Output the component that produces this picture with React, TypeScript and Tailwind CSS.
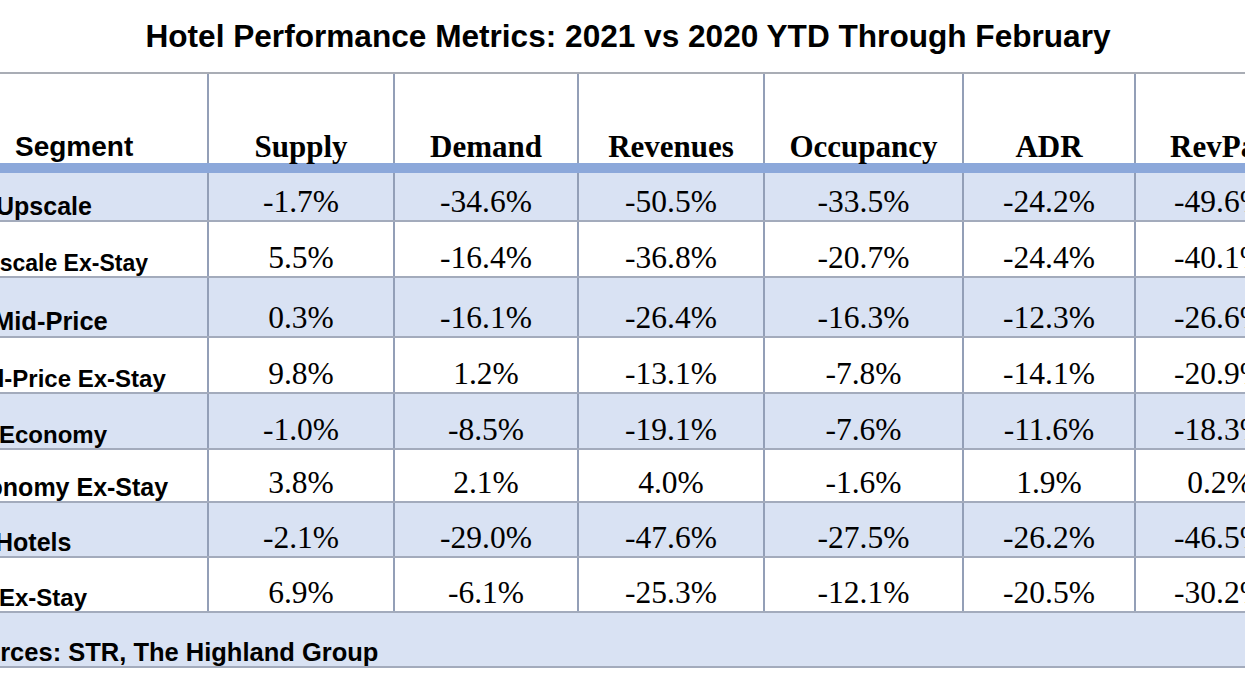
const columns = [
  { title: "Supply", width: "w-[186px]" },
  { title: "Demand", width: "w-[184px]" },
  { title: "Revenues", width: "w-[186px]" },
  { title: "Occupancy", width: "w-[199px]" },
  { title: "ADR", width: "w-[172px]" },
  { title: "RevPar", width: "w-[170px]" },
];

// label offsets are negative: the left of the sheet is cut off in the picture
const rows = [
  { label: "Upscale", label_cls: "ml-[-4px] text-[25px]", height: "h-[49px]", shaded: true, values: ["-1.7%", "-34.6%", "-50.5%", "-33.5%", "-24.2%", "-49.6%"] },
  { label: "Upscale Ex-Stay", label_cls: "ml-[-31px] text-[23px]", height: "h-[56px]", shaded: false, values: ["5.5%", "-16.4%", "-36.8%", "-20.7%", "-24.4%", "-40.1%"] },
  { label: "Mid-Price", label_cls: "ml-[-7px] text-[25.5px]", height: "h-[60px]", shaded: true, values: ["0.3%", "-16.1%", "-26.4%", "-16.3%", "-12.3%", "-26.6%"] },
  { label: "Mid-Price Ex-Stay", label_cls: "ml-[-37px] text-[24px]", height: "h-[56px]", shaded: false, values: ["9.8%", "1.2%", "-13.1%", "-7.8%", "-14.1%", "-20.9%"] },
  { label: "Economy", label_cls: "ml-[-1px] text-[24px]", height: "h-[56px]", shaded: true, values: ["-1.0%", "-8.5%", "-19.1%", "-7.6%", "-11.6%", "-18.3%"] },
  { label: "Economy Ex-Stay", label_cls: "ml-[-43px] text-[25px]", height: "h-[53px]", shaded: false, values: ["3.8%", "2.1%", "4.0%", "-1.6%", "1.9%", "0.2%"] },
  { label: "Hotels", label_cls: "ml-[-5px] text-[25px]", height: "h-[55px]", shaded: true, values: ["-2.1%", "-29.0%", "-47.6%", "-27.5%", "-26.2%", "-46.5%"] },
  { label: "Ex-Stay", label_cls: "ml-[-1px] text-[24px]", height: "h-[55px]", shaded: false, values: ["6.9%", "-6.1%", "-25.3%", "-12.1%", "-20.5%", "-30.2%"] },
];

const sans = "font-['Liberation_Sans',Arial,sans-serif]";
const serif = "font-['Liberation_Serif','Times_New_Roman',serif]";

export default function App() {
  return (
    <div className="w-[1245px] h-[700px] overflow-hidden bg-white text-black">
      <h1 className={`${sans} pt-[21px] pl-[11px] text-center text-[31.6px] font-bold leading-none whitespace-nowrap`}>
        Hotel Performance Metrics: 2021 vs 2020 YTD Through February
      </h1>

      <div className="mt-[19px] w-[1320px] border-t-2 border-[#a9adb5]">
        {/* header */}
        <div className="flex h-[89px]">
          <div className="w-[207px] flex items-end pl-[15px] pb-[2px]">
            <span className={`${sans} text-[28px] font-bold leading-none`}>Segment</span>
          </div>
          {columns.map((col) => (
            <div
              key={col.title}
              className={`${col.width} flex items-end justify-center border-l-2 border-[#939fb7] pb-[1px]`}
            >
              <span className={`${serif} text-[31px] font-bold leading-none whitespace-nowrap`}>{col.title}</span>
            </div>
          ))}
        </div>
        <div className="h-[10px] bg-[#8ca8da]" />

        {rows.map((row) => (
          <div
            key={row.label}
            className={`flex ${row.height} border-b-2 border-[#a3abbc] ${row.shaded ? "bg-[#d9e2f3]" : "bg-white"}`}
          >
            <div className="w-[207px] flex items-end overflow-hidden pb-[1px]">
              <span className={`${sans} ${row.label_cls} font-bold leading-none whitespace-nowrap`}>
                {row.label}
              </span>
            </div>
            {row.values.map((v, i) => (
              <div
                key={i}
                className={`${columns[i].width} flex items-end justify-center border-l-2 border-[#939fb7] pb-[2px]`}
              >
                <span className={`${serif} text-[31.5px] leading-none whitespace-nowrap`}>{v}</span>
              </div>
            ))}
          </div>
        ))}

        {/* footer */}
        <div className="flex items-end h-[55px] border-b-2 border-[#a3abbc] bg-[#d9e2f3] overflow-hidden">
          <span className={`${sans} ml-[-48px] text-[25.5px] font-bold leading-none whitespace-nowrap`}>
            Sources: STR, The Highland Group
          </span>
        </div>
      </div>
    </div>
  );
}
